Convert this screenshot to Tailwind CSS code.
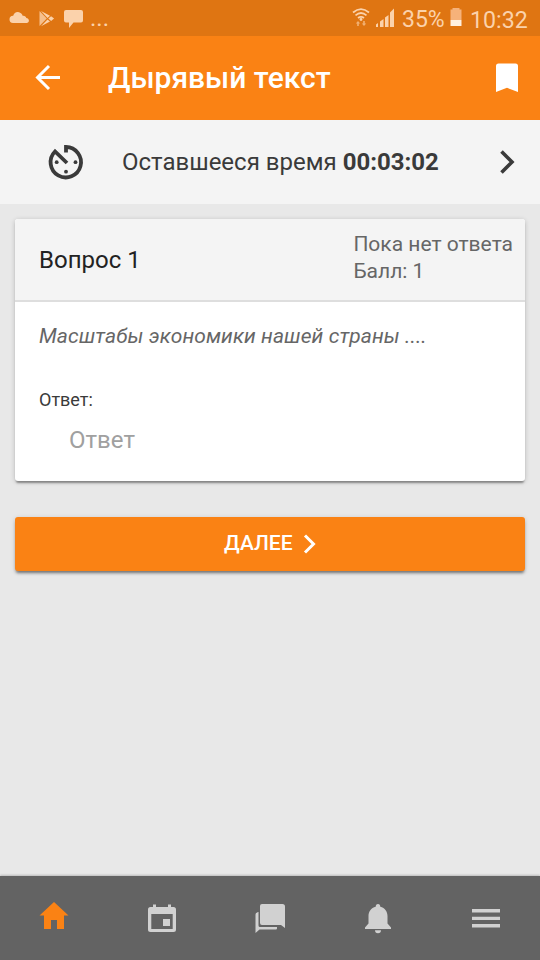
<!DOCTYPE html>
<html lang="ru">
<head>
<meta charset="utf-8">
<title>Дырявый текст</title>
<script src="https://cdn.jsdelivr.net/npm/@tailwindcss/browser@4"></script>
</head>
<body class="bg-[#e8e8e8] font-['Roboto',sans-serif]">
<div class="w-[540px] h-[960px] flex flex-col overflow-hidden">
  <div class="h-9 shrink-0 bg-[#df7512] text-[#fbd2ab] flex items-center">
    <svg class="w-[88px] h-9 shrink-0" viewBox="0 0 88 36" fill="#fbd2ab">
      <path d="M13 23a3.600 3.600 0 0 1 .2-7.200C14 12.500 17.500 11 20.500 13c1.200.7 1.800 1.600 2.300 2.900 2-.2 3.100.8 3.500 2.200 3 0 3.700 4.300.7 4.900z"/>
      <path d="M39.500 11v15l7.300-7.500z" opacity=".8"/>
      <path d="M41 11l9 4.800-2.500 2.300zM48.300 18.600l2.800-2.300 3 2.200-3 2.400zM41 26.200l6.500-6.700 2.500 2z"/>
      <path d="M66 10h15a2 2 0 0 1 2 2v8.500a2 2 0 0 1-2 2h-7.500L69 28v-5.500h-3a2 2 0 0 1-2-2V12a2 2 0 0 1 2-2z"/>
    </svg>
    <span class="text-[24px] leading-9 ml-[2px]">...</span>
    <svg class="w-[50px] h-9 shrink-0 ml-auto" viewBox="350 0 50 36" fill="#fbd2ab">
      <g fill="none" stroke="#fbd2ab" stroke-width="1.700"><path d="M353 12.500q8-6.800 16 0M355.500 15.300q5.500-4.600 11 0M358 18q3-2.400 6 0"/></g>
      <circle cx="361" cy="19.500" r="1.400"/>
      <path opacity=".65" d="M358 21l2.200 2.500h-1.400V26h-1.600v-2.500h-1.400zM364 26l-2.200-2.500h1.400V21h1.600v2.500h1.400z"/>
      <path d="M376 24.500l2-1.500v4h-2zM380 21.500l3.500-2.500v8H380zM385 17.500l3.500-2.500v12H385zM390 12.500l4-4V27h-4z"/>
    </svg>
    <span class="w-[46px] ml-[2px] text-[23px] leading-9 pt-1 whitespace-nowrap">35%</span>
    <svg class="w-[16px] h-9 shrink-0" viewBox="448 0 16 36"><path d="M452.500 8h7v2h-7zM450.500 9.500h11V20h-11z" fill="#f6b27a"/><path d="M450.500 20h11v6h-11z" fill="#fff0df"/></svg>
    <span class="w-[64px] ml-[6px] mr-[6px] text-[23.200px] leading-9 pt-1 whitespace-nowrap">10:32</span>
  </div>
  <header class="h-[84px] shrink-0 bg-[#fa8214] flex items-center text-white">
    <svg class="w-[108px] h-[84px] shrink-0" viewBox="0 36 108 84" fill="none" stroke="#fff" stroke-width="3"><path d="M60 77.500H38M49 66L37.500 77.500 49 89"/></svg>
    <h1 class="text-[30px] font-medium leading-[84px] whitespace-nowrap">Дырявый текст</h1>
    <svg class="w-[60px] h-[84px] shrink-0 ml-auto" viewBox="480 36 60 84" fill="#fff"><path d="M498.500 63.500h17a2.500 2.500 0 0 1 2.500 2.500v26l-11-4.200-11 4.200V66a2.500 2.500 0 0 1 2.500-2.500z"/></svg>
  </header>
  <div class="h-[84px] shrink-0 bg-[#f4f4f4] flex items-center text-[#3a3a3a]">
    <svg class="w-[122px] h-[84px] shrink-0" viewBox="0 120 122 84" fill="none" stroke="#3a3a3a" stroke-width="3.800"><path d="M66 152.500V147A15.200 15.200 0 1 1 55 151.500L67 163"/><g fill="#3a3a3a" stroke="none"><circle cx="56.700" cy="162.200" r="1.900"/><circle cx="75.500" cy="162.200" r="1.900"/><circle cx="66" cy="171.700" r="1.900"/></g></svg>
    <p class="text-[24px] leading-[84px] whitespace-nowrap">Оставшееся время <b>00:03:02</b></p>
    <svg class="w-[60px] h-[84px] shrink-0 ml-auto" viewBox="480 120 60 84" fill="none" stroke="#3a3a3a" stroke-width="3.600"><path d="M501.500 151.500L512 162l-10.500 10.500"/></svg>
  </div>
  <main class="flex-1 px-[15px] pt-[15px]">
    <section class="h-[262px] bg-white rounded-[3px] overflow-hidden shadow-[0_3px_2px_-1px_rgba(0,0,0,0.35),0_1px_5px_rgba(0,0,0,0.2)]">
      <div class="h-[83px] bg-[#f4f4f4] border-b-2 border-[#dedede] flex justify-between items-start pl-6 pr-3">
        <h2 class="text-[24px] leading-[82px] text-[#222]">Вопрос 1</h2>
        <div class="pt-[12px] text-[21px] leading-[27px] text-[#666] whitespace-nowrap"><p>Пока нет ответа</p><p>Балл: 1</p></div>
      </div>
      <div class="px-6 pt-5">
        <p class="text-[21px] leading-[28px] tracking-[0.08px] italic text-[#666]">Масштабы экономики нашей страны ....</p>
        <p class="mt-[38px] text-[18px] leading-6 text-[#3a3a3a]">Ответ:</p>
        <p class="mt-[13px] pl-[30px] text-[24px] leading-[30px] text-[#a0a0a0]">Ответ</p>
      </div>
    </section>
    <button class="mt-9 w-full h-[54px] rounded-[3px] bg-[#fa8214] text-white flex items-center pl-[209px] shadow-[0_3px_3px_-1px_rgba(0,0,0,0.45),0_1px_5px_rgba(0,0,0,0.15)]">
      <span class="text-[21px] font-medium leading-[54px] w-[77px] pb-[2px] text-left">ДАЛЕЕ</span>
      <svg class="w-4 h-[54px]" viewBox="301 517 16 54" fill="none" stroke="#fff" stroke-width="3"><path d="M305 535.500l8.500 8.500-8.500 8.500"/></svg>
    </button>
  </main>
  <nav class="h-[84px] shrink-0 bg-[#636363] grid grid-cols-5 shadow-[0_-1px_2px_rgba(0,0,0,0.2)]">
    <svg class="w-full h-[84px]" viewBox="0 876 108 84" fill="#fa8214"><path d="M54 902l14.500 13.500H64V929h-7v-9h-6v9h-7v-13.500h-4.500z"/></svg>
    <svg class="w-full h-[84px]" viewBox="108 876 108 84" fill="#d1d1d1"><path fill-rule="evenodd" d="M153 904.500h3v2.500h12v-2.500h3v2.500h2.500a2.500 2.500 0 0 1 2.500 2.500V929.500a2.500 2.500 0 0 1-2.500 2.500h-23a2.500 2.500 0 0 1-2.500-2.500V909.500a2.500 2.500 0 0 1 2.500-2.500H153zM151.300 914v15h21.400v-15z"/><path d="M163 919h7v7h-7z"/></svg>
    <svg class="w-full h-[84px]" viewBox="216 876 108 84" fill="#d1d1d1"><path d="M262 904h20.500a2.500 2.500 0 0 1 2.500 2.500V928l-4-3h-19a2 2 0 0 1-2-2V906a2 2 0 0 1 2-2zM257.500 912h1v13.500a1.500 1.500 0 0 0 1.500 1.500h17v1.500a1 1 0 0 1-1 1h-16.500l-4 3.500v-18.500a2 2 0 0 1 2-2z"/></svg>
    <svg class="w-full h-[84px]" viewBox="324 876 108 84" fill="#d1d1d1"><path d="M378 904c1.500 0 2.300 1.200 2.300 2.700 4.700 1.300 7.200 4.800 7.200 9.300v7.500l3.500 4.100V929h-26v-1.400l3.500-4.100V916c0-4.500 2.500-8 7.200-9.300 0-1.500.8-2.700 2.300-2.700zM375 930.300h6a3 3 0 0 1-6 0z"/></svg>
    <svg class="w-full h-[84px]" viewBox="432 876 108 84" fill="#d1d1d1"><path d="M472 909h28v3.600h-28zM472 916.800h28v3.200h-28zM472 924h28v3.600h-28z"/></svg>
  </nav>
</div>
</body>
</html>
